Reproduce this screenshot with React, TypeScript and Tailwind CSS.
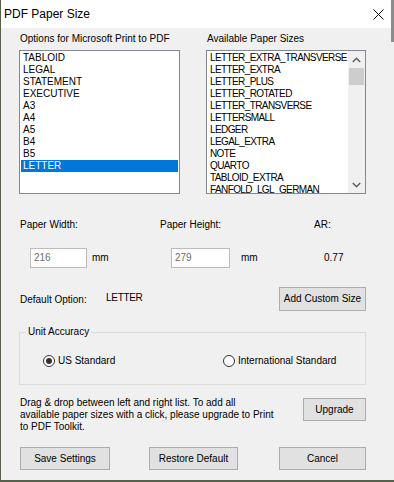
import React from "react";

const leftItems = ["TABLOID", "LEGAL", "STATEMENT", "EXECUTIVE", "A3", "A4", "A5", "B4", "B5", "LETTER"];
const rightItems = [
  "LETTER_EXTRA_TRANSVERSE",
  "LETTER_EXTRA",
  "LETTER_PLUS",
  "LETTER_ROTATED",
  "LETTER_TRANSVERSE",
  "LETTERSMALL",
  "LEDGER",
  "LEGAL_EXTRA",
  "NOTE",
  "QUARTO",
  "TABLOID_EXTRA",
  "FANFOLD_LGL_GERMAN",
];

function Btn({ label, w, h = "h-[23px]" }: { label: string; w: string; h?: string }) {
  return (
    <div
      className={`${w} ${h} flex items-center justify-center border border-[#adadad] bg-[#e1e1e1] text-black`}
    >
      {label}
    </div>
  );
}

function Radio({ checked, label }: { checked?: boolean; label: string }) {
  return (
    <div className="flex items-center">
      <div className="w-[12px] h-[12px] rounded-full border border-[#333333] bg-white flex items-center justify-center">
        {checked && <div className="w-[6px] h-[6px] rounded-full bg-[#333333]" />}
      </div>
      <span className="ml-[3px]">{label}</span>
    </div>
  );
}

export default function App() {
  return (
    <div className="w-[394px] h-[482px] bg-[#f0f0f0] flex font-['Liberation_Sans',Arial,sans-serif] text-[10px] leading-[12px] text-black border-l border-l-[#56604c] border-b-2 border-b-[#56604c] overflow-hidden">
      <div className="w-[390px] flex flex-col">
        {/* Title bar */}
        <div className="h-[28px] bg-white flex items-center justify-between shrink-0">
          <span className="pl-[3px] text-[12px] leading-[14px] text-black">PDF Paper Size</span>
          <svg width="11" height="11" viewBox="0 0 11 11" className="mr-[7px]">
            <line x1="0.5" y1="0.5" x2="10.5" y2="10.5" stroke="#000" strokeWidth="1" />
            <line x1="10.5" y1="0.5" x2="0.5" y2="10.5" stroke="#000" strokeWidth="1" />
          </svg>
        </div>

        {/* Body */}
        <div className="pl-[18px] flex flex-col">
          <div className="w-[347px] flex flex-col">
            {/* Lists */}
            <div className="flex mt-[5px]">
              <div className="w-[161px] flex flex-col">
                <div className="h-[12px] pl-[1px]">Options for Microsoft Print to PDF</div>
                <div className="mt-[5px] h-[144px] border border-[#828790] bg-white pt-[1px] overflow-hidden">
                  {leftItems.map((it) => (
                    <div
                      key={it}
                      className={`h-[12px] mx-[1px] px-[2px] whitespace-nowrap ${
                        it === "LETTER" ? "bg-[#0078d7] text-white" : ""
                      }`}
                    >
                      {it}
                    </div>
                  ))}
                </div>
              </div>
              <div className="ml-[26px] w-[160px] flex flex-col">
                <div className="h-[12px] pl-[1px]">Available Paper Sizes</div>
                <div className="mt-[5px] h-[144px] border border-[#828790] bg-white flex overflow-hidden">
                  <div className="flex-1 pt-[1px] overflow-hidden">
                    {rightItems.map((it) => (
                      <div key={it} className="h-[12px] mx-[1px] px-[2px] whitespace-nowrap tracking-[-0.6px]">
                        {it}
                      </div>
                    ))}
                  </div>
                  <div className="w-[17px] bg-[#f0f0f0] flex flex-col">
                    <div className="h-[17px] flex items-center justify-center">
                      <svg width="9" height="6" viewBox="0 0 9 6">
                        <polyline points="0.8,5 4.5,1.3 8.2,5" fill="none" stroke="#606060" strokeWidth="1.6" />
                      </svg>
                    </div>
                    <div className="h-[17px] mx-[1px] bg-[#cdcdcd]" />
                    <div className="flex-1" />
                    <div className="h-[17px] flex items-center justify-center">
                      <svg width="9" height="6" viewBox="0 0 9 6">
                        <polyline points="0.8,1 4.5,4.7 8.2,1" fill="none" stroke="#606060" strokeWidth="1.6" />
                      </svg>
                    </div>
                  </div>
                </div>
              </div>
            </div>

            {/* Width / Height labels */}
            <div className="flex mt-[25px] h-[12px] pl-[1px]">
              <span className="w-[140px]">Paper Width:</span>
              <span className="w-[154px]">Paper Height:</span>
              <span>AR:</span>
            </div>

            {/* Inputs */}
            <div className="flex items-center mt-[17px] h-[20px]">
              <div className="ml-[11px] w-[57px] h-[20px] border border-[#bcbcbc] bg-white flex items-center pl-[3px] text-[#6d6d6d]">
                216
              </div>
              <span className="ml-[5px] w-[79px]">mm</span>
              <div className="w-[59px] h-[20px] border border-[#bcbcbc] bg-white flex items-center pl-[3px] text-[#6d6d6d]">
                279
              </div>
              <span className="ml-[11px] w-[83px]">mm</span>
              <span>0.77</span>
            </div>

            {/* Default option */}
            <div className="flex items-center mt-[19px] h-[24px]">
              <span className="pl-[1px] w-[87px] mt-[1px]">Default Option:</span>
              <span className="tracking-[-0.3px] mb-[2px]">LETTER</span>
              <div className="ml-auto">
                <Btn label="Add Custom Size" w="w-[87px]" h="h-[24px]" />
              </div>
            </div>

            {/* Group box */}
            <div className="relative mt-[21px] h-[53px] border border-[#dcdcdc] flex items-center">
              <span className="absolute left-[6px] top-[-7px] bg-[#f0f0f0] px-[2px]">Unit Accuracy</span>
              <div className="flex items-center pl-[23px] mt-[5px]">
                <div className="w-[180px]">
                  <Radio checked label="US Standard" />
                </div>
                <Radio label="International Standard" />
              </div>
            </div>

            {/* Paragraph + Upgrade */}
            <div className="flex items-start mt-[12px]">
              <p className="pl-[1px] leading-[12px] w-[270px]">
                Drag &amp; drop between left and right list. To add all
                <br />
                available paper sizes with a click, please upgrade to Print
                <br />
                to PDF Toolkit.
              </p>
              <div className="ml-auto mt-[1px]">
                <Btn label="Upgrade" w="w-[63px]" />
              </div>
            </div>

            {/* Bottom buttons */}
            <div className="flex mt-[14px]">
              <div className="ml-[1px]">
                <Btn label="Save Settings" w="w-[90px]" />
              </div>
              <div className="ml-[39px]">
                <Btn label="Restore Default" w="w-[89px]" />
              </div>
              <div className="ml-auto">
                <Btn label="Cancel" w="w-[87px]" />
              </div>
            </div>
          </div>
        </div>
      </div>
      {/* right edge strip */}
      <div className="w-[3px] flex flex-col">
        <div className="h-[42px] bg-[#8c8c8c]" />
        <div className="flex-1 bg-[#f0f0f0]" />
      </div>
    </div>
  );
}
